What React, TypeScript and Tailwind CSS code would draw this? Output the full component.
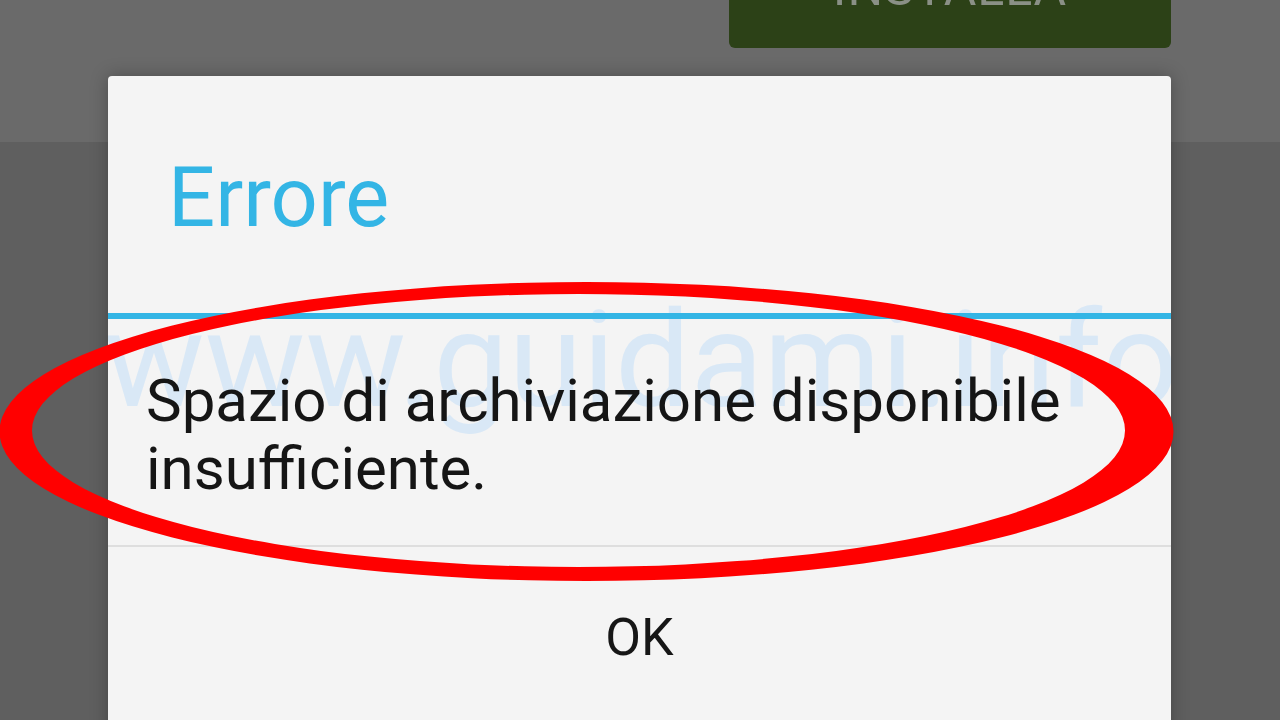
import React from "react";

const font = { fontFamily: "Roboto, 'Open Sans', sans-serif" };

function RedCircle() {
  return (
    <svg
      className="absolute inset-0 pointer-events-none"
      width="1280"
      height="720"
      viewBox="0 0 1280 720"
    >
      <path
        fillRule="evenodd"
        fill="#ff0000"
        d="M -0.5 431.5 A 587 149.5 0 1 0 1173.5 431.5 A 587 149.5 0 1 0 -0.5 431.5 Z M 32 430.5 A 546.5 136.5 0 1 0 1125 430.5 A 546.5 136.5 0 1 0 32 430.5 Z"
      />
    </svg>
  );
}

export default function App() {
  return (
    <div
      className="relative w-[1280px] h-[720px] overflow-hidden bg-[#5f5f5f]"
      style={font}
    >
      {/* store page behind the dialog */}
      <div className="h-[142px] bg-[#6a6a6a] flex justify-end pr-[109px]">
        <div className="w-[442px] h-[48px] bg-[#2c4117] rounded-b-[6px] flex justify-center overflow-hidden">
          <span className="mt-[-37px] text-[50px] leading-[50px] text-[#8a9086] tracking-[1px]">
            INSTALLA
          </span>
        </div>
      </div>

      {/* dialog */}
      <div className="absolute left-[108px] top-[76px] w-[1063px] h-[660px] bg-[#f4f4f4] rounded-t-[4px] overflow-hidden shadow-[0_0_18px_rgba(0,0,0,0.28)] flex flex-col">
        <div className="absolute left-[-4px] top-[218px] text-[134px] leading-[134px] text-[#d9e8f6] whitespace-nowrap pointer-events-none select-none">
          www.guidami.info
        </div>

        <div className="relative h-[237px] pt-[73px] pl-[60px]">
          <h1 className="text-[83px] leading-[98px] text-[#33b5e5] font-normal">
            Errore
          </h1>
        </div>
        <div className="relative h-[6px] bg-[#33b5e5]" />

        <div className="relative pt-[48px] pb-[42px] pl-[38px] pr-[36px]">
          <p className="text-[60px] leading-[68px] text-[#151515]">
            Spazio di archiviazione disponibile insufficiente.
          </p>
        </div>
        <div className="relative h-[2px] bg-[#dedede]" />

        <div className="relative flex-1 flex justify-center pt-[60px]">
          <span className="text-[52px] leading-[61px] text-[#161616]">OK</span>
        </div>
      </div>

      <RedCircle />
    </div>
  );
}
